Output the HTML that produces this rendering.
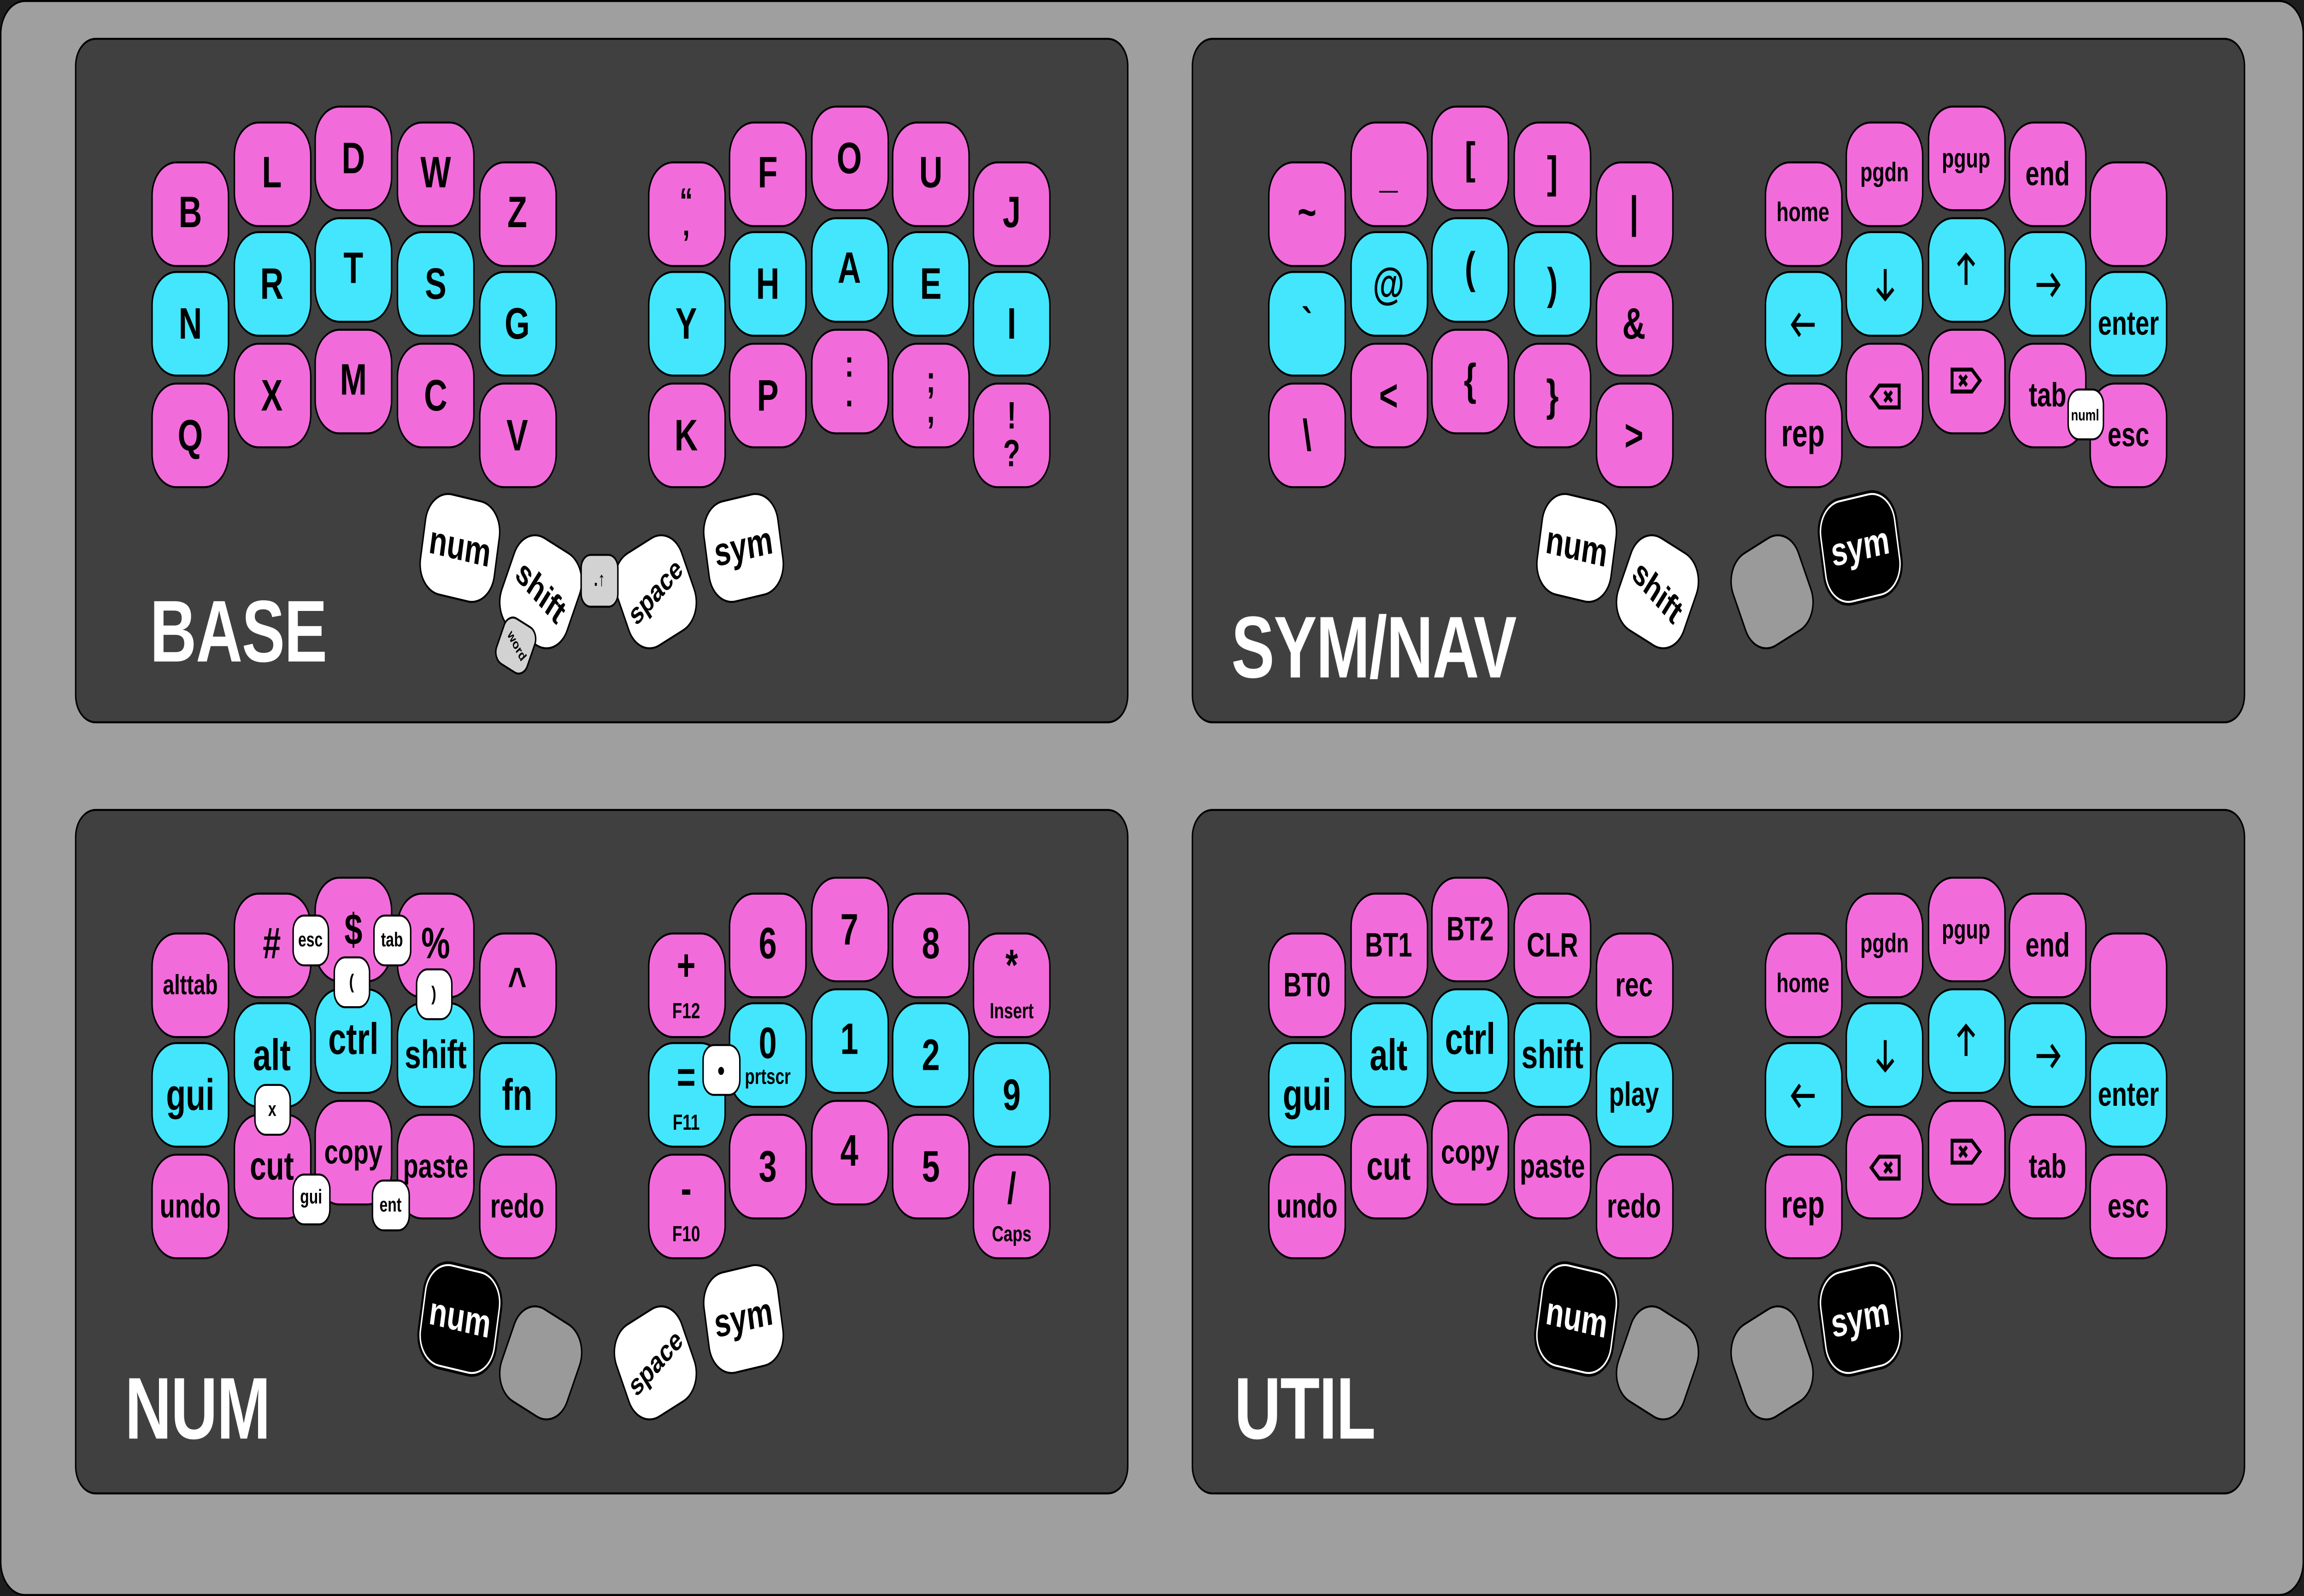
<!DOCTYPE html>
<html><head><meta charset="utf-8">
<style>
html,body{margin:0;padding:0;width:100%;height:100%;overflow:hidden;background:#1e1e1e;}
#root{position:fixed;left:0;top:0;width:100vw;height:100vh;display:block;}
#s{position:relative;width:1568px;height:801px;font-family:"Liberation Sans",sans-serif;font-weight:bold;overflow:hidden;background:#1e1e1e;}
#frame{position:absolute;left:0;top:0;width:1568px;height:801px;box-sizing:border-box;border:1.8px solid #000;border-radius:17px;background:#9f9f9f;}
.panel{position:absolute;width:717px;height:344px;box-sizing:border-box;border:1.9px solid #000;border-radius:14px;background:#404040;}
.w{position:absolute;left:0;top:0;width:800px;height:400px;}
.k{position:absolute;width:53px;height:53px;box-sizing:border-box;border:1.8px solid #000;border-radius:17px;display:flex;align-items:center;justify-content:center;font-size:22px;color:#000;text-align:center;line-height:1;}
.p{background:#f26bdb}.c{background:#43e6fd}
.l0{left:103px}.l1{left:158.5px}.l2{left:214px}.l3{left:270px}.l4{left:325.5px}
.q0{left:440.5px}.q1{left:496px}.q2{left:551.5px}.q3{left:607px}.q4{left:662px}
.t00{top:80.5px}.t01{top:136.3px}.t02{top:192.1px}
.t10{top:60.5px}.t11{top:116.3px}.t12{top:172.1px}
.t20{top:53px}.t21{top:108.8px}.t22{top:164.6px}
.s13{font-size:13.5px}.s17{font-size:17px}.s19{font-size:19px}.s14{font-size:14px}
.two{display:flex;flex-direction:column;align-items:center;}
.two small{font-size:11px;margin-top:7px}
.th{position:absolute;width:52px;height:52px;box-sizing:border-box;border:1.8px solid #000;border-radius:16px;display:flex;align-items:center;justify-content:center;font-size:20px;background:#fff;color:#000;}
.blk{background:#000;color:#fff;border:1.8px solid #fff;box-shadow:0 0 0 1.4px #000;}
.gr{background:#9a9a9a;}
.T1{left:287px;top:249px;transform:rotate(10deg)}
.T2{left:343px;top:271px;width:50px;height:52px;transform:rotate(25deg)}
.T3{left:421px;top:271px;width:50px;height:52px;transform:rotate(-25deg)}
.T4{left:480px;top:249px;transform:rotate(-10deg)}
.mini{position:absolute;box-sizing:border-box;border:1.6px solid #000;border-radius:8px;background:#fff;display:flex;align-items:center;justify-content:center;font-size:10px;width:25.5px;height:26px;color:#000;}
.title{position:absolute;font-size:44px;line-height:44px;color:#fff;letter-spacing:-0.5px;white-space:nowrap;}
.k svg{display:block}
</style></head><body>
<svg id="root" viewBox="0 0 1568 801" preserveAspectRatio="none" xmlns="http://www.w3.org/2000/svg">
<foreignObject x="0" y="0" width="1568" height="801">
<div xmlns="http://www.w3.org/1999/xhtml" id="s">
<div id="frame"></div>
<div class="panel" style="left:51px;top:19px"></div>
<div class="panel" style="left:811px;top:19px"></div>
<div class="panel" style="left:51px;top:406px"></div>
<div class="panel" style="left:811px;top:406px"></div>

<div class="w" style="left:0;top:0">
<div class="k p l0 t00">B</div><div class="k p l1 t10">L</div><div class="k p l2 t20">D</div><div class="k p l3 t10">W</div><div class="k p l4 t00">Z</div>
<div class="k c l0 t01">N</div><div class="k c l1 t11">R</div><div class="k c l2 t21">T</div><div class="k c l3 t11">S</div><div class="k c l4 t01">G</div>
<div class="k p l0 t02">Q</div><div class="k p l1 t12">X</div><div class="k p l2 t22">M</div><div class="k p l3 t12">C</div><div class="k p l4 t02">V</div>
<div class="k p q0 t00"><span class="two" style="font-size:18px;line-height:11px">“<span>‚</span></span></div><div class="k p q1 t10">F</div><div class="k p q2 t20">O</div><div class="k p q3 t10">U</div><div class="k p q4 t00">J</div>
<div class="k c q0 t01">Y</div><div class="k c q1 t11">H</div><div class="k c q2 t21">A</div><div class="k c q3 t11">E</div><div class="k c q4 t01">I</div>
<div class="k p q0 t02">K</div><div class="k p q1 t12">P</div><div class="k p q2 t22"><span class="two" style="font-size:19px;line-height:15px">:<span>.</span></span></div><div class="k p q3 t12"><span class="two" style="font-size:19px;line-height:15px">;<span>,</span></span></div><div class="k p q4 t02"><span class="two" style="font-size:19px;line-height:19px">!<span>?</span></span></div>
<div class="th T1">num</div><div class="th T2" style="font-size:18px"><span style="transform:rotate(15deg);display:inline-block">shift</span></div>
<div class="th T3" style="font-size:15px"><span style="transform:rotate(-15deg);display:inline-block">space</span></div><div class="th T4">sym</div>
<div class="mini" style="left:395px;top:278px;width:26px;height:27px;background:#d2d2d2;border-radius:7px;font-size:10px">.↑</div>
<div class="mini" style="left:339px;top:311px;width:24px;height:26px;background:#d2d2d2;border-radius:7px;font-size:7px;transform:rotate(25deg)"><span style="transform:rotate(30deg);display:inline-block">word</span></div>
<div class="title" style="left:102px;top:296px">BASE</div>
</div>

<div class="w" style="left:760px;top:0">
<div class="k p l0 t00">~</div><div class="k p l1 t10">_</div><div class="k p l2 t20">[</div><div class="k p l3 t10">]</div><div class="k p l4 t00">|</div>
<div class="k c l0 t01">`</div><div class="k c l1 t11">@</div><div class="k c l2 t21">(</div><div class="k c l3 t11">)</div><div class="k p l4 t01">&amp;</div>
<div class="k p l0 t02">\</div><div class="k p l1 t12">&lt;</div><div class="k p l2 t22">{</div><div class="k p l3 t12">}</div><div class="k p l4 t02">&gt;</div>
<div class="k p q0 t00 s13">home</div><div class="k p q1 t10 s13">pgdn</div><div class="k p q2 t20 s13">pgup</div><div class="k p q3 t10 s17">end</div><div class="k p q4 t00"></div>
<div class="k c q0 t01"><svg width="18" height="14" viewBox="0 0 18 14"><path d="M17 7H2M7 1.5L2 7L7 12.5" fill="none" stroke="#000" stroke-width="2"/></svg></div>
<div class="k c q1 t11"><svg width="14" height="18" viewBox="0 0 14 18"><path d="M7 1V16M1.5 11L7 16L12.5 11" fill="none" stroke="#000" stroke-width="2"/></svg></div>
<div class="k c q2 t21"><svg width="14" height="18" viewBox="0 0 14 18"><path d="M7 17V2M1.5 7L7 2L12.5 7" fill="none" stroke="#000" stroke-width="2"/></svg></div>
<div class="k c q3 t11"><svg width="18" height="14" viewBox="0 0 18 14"><path d="M1 7H16M11 1.5L16 7L11 12.5" fill="none" stroke="#000" stroke-width="2"/></svg></div>
<div class="k c q4 t01 s17">enter</div>
<div class="k p q0 t02 s19">rep</div>
<div class="k p q1 t12"><svg width="22" height="14" viewBox="0 0 22 14"><path d="M7 1.5H20.5V12.5H7L1.5 7Z" fill="none" stroke="#000" stroke-width="2"/><path d="M10.5 4.5L15.5 9.5M15.5 4.5L10.5 9.5" stroke="#000" stroke-width="2"/></svg></div>
<div class="k p q2 t22"><svg width="22" height="14" viewBox="0 0 22 14"><path d="M15 1.5H1.5V12.5H15L20.5 7Z" fill="none" stroke="#000" stroke-width="2"/><path d="M6.5 4.5L11.5 9.5M11.5 4.5L6.5 9.5" stroke="#000" stroke-width="2"/></svg></div>
<div class="k p q3 t12 s17">tab</div><div class="k p q4 t02 s17">esc</div>
<div class="mini" style="left:646.5px;top:195px;width:25px;height:26px;font-size:8px">numl</div>
<div class="th T1">num</div><div class="th T2" style="font-size:18px"><span style="transform:rotate(15deg);display:inline-block">shift</span></div>
<div class="th T3 gr"></div><div class="th T4 blk">sym</div>
<div class="title" style="left:78px;top:304px">SYM/NAV</div>
</div>

<div class="w" style="left:0;top:387px">
<div class="k p l0 t00 s14">alttab</div><div class="k p l1 t10">#</div><div class="k p l2 t20">$</div><div class="k p l3 t10">%</div><div class="k p l4 t00">^</div>
<div class="k c l0 t01">gui</div><div class="k c l1 t11">alt</div><div class="k c l2 t21">ctrl</div><div class="k c l3 t11" style="font-size:20px">shift</div><div class="k c l4 t01">fn</div>
<div class="k p l0 t02 s17">undo</div><div class="k p l1 t12" style="font-size:20px">cut</div><div class="k p l2 t22 s17">copy</div><div class="k p l3 t12 s17">paste</div><div class="k p l4 t02 s17">redo</div>
<div class="k p q0 t00"><span class="two">+<small>F12</small></span></div><div class="k p q1 t10">6</div><div class="k p q2 t20">7</div><div class="k p q3 t10">8</div><div class="k p q4 t00"><span class="two">*<small>Insert</small></span></div>
<div class="k c q0 t01"><span class="two">=<small>F11</small></span></div><div class="k c q1 t11"><span class="two">0<small style="margin-top:1px">prtscr</small></span></div><div class="k c q2 t21">1</div><div class="k c q3 t11">2</div><div class="k c q4 t01">9</div>
<div class="k p q0 t02"><span class="two">-<small>F10</small></span></div><div class="k p q1 t12">3</div><div class="k p q2 t22">4</div><div class="k p q3 t12">5</div><div class="k p q4 t02"><span class="two">/<small>Caps</small></span></div>
<div class="mini" style="left:198.5px;top:72px">esc</div>
<div class="mini" style="left:254px;top:72px">tab</div>
<div class="mini" style="left:226.5px;top:93px">(</div>
<div class="mini" style="left:282.5px;top:99px">)</div>
<div class="mini" style="left:172.5px;top:157px">x</div>
<div class="mini" style="left:199px;top:201.5px">gui</div>
<div class="mini" style="left:253px;top:205px">ent</div>
<div class="mini" style="left:478px;top:137px;font-size:14px">•</div>
<div class="th T1 blk">num</div><div class="th T2 gr"></div>
<div class="th T3" style="font-size:15px"><span style="transform:rotate(-15deg);display:inline-block">space</span></div><div class="th T4">sym</div>
<div class="title" style="left:85px;top:299px">NUM</div>
</div>

<div class="w" style="left:760px;top:387px">
<div class="k p l0 t00 s17">BT0</div><div class="k p l1 t10 s17">BT1</div><div class="k p l2 t20 s17">BT2</div><div class="k p l3 t10 s17">CLR</div><div class="k p l4 t00 s17">rec</div>
<div class="k c l0 t01">gui</div><div class="k c l1 t11">alt</div><div class="k c l2 t21">ctrl</div><div class="k c l3 t11" style="font-size:20px">shift</div><div class="k c l4 t01 s17">play</div>
<div class="k p l0 t02 s17">undo</div><div class="k p l1 t12" style="font-size:20px">cut</div><div class="k p l2 t22 s17">copy</div><div class="k p l3 t12 s17">paste</div><div class="k p l4 t02 s17">redo</div>
<div class="k p q0 t00 s13">home</div><div class="k p q1 t10 s13">pgdn</div><div class="k p q2 t20 s13">pgup</div><div class="k p q3 t10 s17">end</div><div class="k p q4 t00"></div>
<div class="k c q0 t01"><svg width="18" height="14" viewBox="0 0 18 14"><path d="M17 7H2M7 1.5L2 7L7 12.5" fill="none" stroke="#000" stroke-width="2"/></svg></div>
<div class="k c q1 t11"><svg width="14" height="18" viewBox="0 0 14 18"><path d="M7 1V16M1.5 11L7 16L12.5 11" fill="none" stroke="#000" stroke-width="2"/></svg></div>
<div class="k c q2 t21"><svg width="14" height="18" viewBox="0 0 14 18"><path d="M7 17V2M1.5 7L7 2L12.5 7" fill="none" stroke="#000" stroke-width="2"/></svg></div>
<div class="k c q3 t11"><svg width="18" height="14" viewBox="0 0 18 14"><path d="M1 7H16M11 1.5L16 7L11 12.5" fill="none" stroke="#000" stroke-width="2"/></svg></div>
<div class="k c q4 t01 s17">enter</div>
<div class="k p q0 t02 s19">rep</div>
<div class="k p q1 t12"><svg width="22" height="14" viewBox="0 0 22 14"><path d="M7 1.5H20.5V12.5H7L1.5 7Z" fill="none" stroke="#000" stroke-width="2"/><path d="M10.5 4.5L15.5 9.5M15.5 4.5L10.5 9.5" stroke="#000" stroke-width="2"/></svg></div>
<div class="k p q2 t22"><svg width="22" height="14" viewBox="0 0 22 14"><path d="M15 1.5H1.5V12.5H15L20.5 7Z" fill="none" stroke="#000" stroke-width="2"/><path d="M6.5 4.5L11.5 9.5M11.5 4.5L6.5 9.5" stroke="#000" stroke-width="2"/></svg></div>
<div class="k p q3 t12 s17">tab</div><div class="k p q4 t02 s17">esc</div>
<div class="th T1 blk">num</div><div class="th T2 gr"></div>
<div class="th T3 gr"></div><div class="th T4 blk">sym</div>
<div class="title" style="left:80px;top:299px">UTIL</div>
</div>
</div>
</foreignObject>
</svg>
</body></html>
